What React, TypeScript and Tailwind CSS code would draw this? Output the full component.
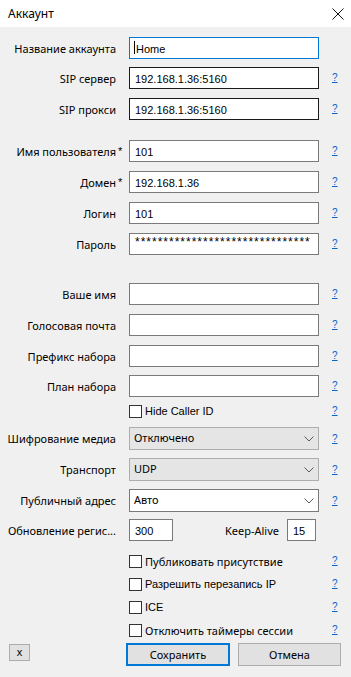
const LABEL = "w-[116px] shrink-0 text-right text-[11px] leading-none text-black whitespace-nowrap"
const VAL = "font-['Liberation_Sans',sans-serif] text-[11px] text-black"

const Help = () => (
    <span className="ml-[13px] font-['Liberation_Sans',sans-serif] text-[10px] leading-none text-[#0066cc] underline">?</span>
)

const Chevron = () => (
    <svg width="10" height="6" viewBox="0 0 10 6" className="ml-auto mr-[4px]">
        <polyline points="0.5,0.5 5,5 9.5,0.5" fill="none" stroke="#5a5a5a" strokeWidth="1" />
    </svg>
)

type FieldProps = {
    label: string
    value?: string
    star?: boolean
    border?: string
    mt: string
    children?: React.ReactNode
}

const Field = ({ label, value, star, border, mt, children }: FieldProps) => (
    <div className={`flex items-center h-[22px] ${mt}`}>
        <div className={LABEL}>{label}</div>
        <div className="w-[13px] shrink-0 pl-[2px] text-[11px] leading-none font-['Liberation_Sans',sans-serif]">{star ? '*' : ''}</div>
        <div className={`w-[190px] shrink-0 h-full bg-white border ${border ?? 'border-[#7a7a7a]'} flex items-start pt-[3px] pl-[5px] overflow-hidden whitespace-nowrap ${VAL}`}>
            {children ?? value}
        </div>
        <Help />
    </div>
)

const Select = ({ label, value, disabled, mt }: { label: string; value: string; disabled?: boolean; mt: string }) => (
    <div className={`flex items-center h-[23px] ${mt}`}>
        <div className={LABEL}>{label}</div>
        <div className="w-[13px] shrink-0" />
        <div className={`w-[190px] h-full flex items-center pl-[4px] border text-[11px] ${disabled ? 'bg-[#e5e5e5] border-[#adadad]' : 'bg-white border-[#7a7a7a]'}`}>
            <span>{value}</span>
            <Chevron />
        </div>
        <Help />
    </div>
)

const Check = ({ label, mt, tahoma }: { label: string; mt: string; tahoma?: boolean }) => (
    <div className={`flex items-center h-[22px] ${mt}`}>
        <div className="w-[129px] shrink-0" />
        <div className="w-[13px] h-[13px] bg-white border border-[#333333] shrink-0" />
        <span className={`ml-[3px] w-[174px] leading-none ${tahoma ? "font-['Liberation_Sans',sans-serif] text-[11px]" : 'text-[11px]'}`}>{label}</span>
        <Help />
    </div>
)

export default function App() {
    return (
        <div className="w-[351px] h-[677px] bg-[#f0f0f0] font-['Noto_Sans',sans-serif] text-black overflow-hidden">
            <div className="h-[27px] bg-white flex items-center justify-between pl-[8px] pr-[6px]">
                <span className="text-[12px]">Аккаунт</span>
                <svg width="12" height="12" viewBox="0 0 12 12" className="mr-[1px]">
                    <path d="M0.5 0.5 L11.5 11.5 M11.5 0.5 L0.5 11.5" stroke="#111" strokeWidth="1" />
                </svg>
            </div>

            <div className="flex items-center h-[22px] mt-[10px]">
                <div className={LABEL}>Название аккаунта</div>
                <div className="w-[13px] shrink-0" />
                <div className={`w-[190px] h-full bg-white border border-[#0078d7] flex items-start pt-[3px] pl-[4px] ${VAL}`}>
                    <span className="w-px h-[13px] bg-black mr-[1px]" />Home
                </div>
            </div>
            <Field label="SIP сервер" value="192.168.1.36:5160" border="border-[#1a1a1a]" mt="mt-[8px]" />
            <Field label="SIP прокси" value="192.168.1.36:5160" border="border-[#1a1a1a]" mt="mt-[9px]" />

            <Field label="Имя пользователя" star value="101" mt="mt-[20px]" />
            <Field label="Домен" star value="192.168.1.36" mt="mt-[9px]" />
            <Field label="Логин" value="101" mt="mt-[9px]" />
            <Field label="Пароль" mt="mt-[9px]">
                <span className="text-[12px] leading-[11px] tracking-[1px]">{'*'.repeat(31)}</span>
            </Field>

            <Field label="Ваше имя" mt="mt-[28px]" />
            <Field label="Голосовая почта" mt="mt-[9px]" />
            <Field label="Префикс набора" mt="mt-[9px]" />
            <Field label="План набора" mt="mt-[8px]" />
            <Check label="Hide Caller ID" tahoma mt="mt-[3px]" />

            <Select label="Шифрование медиа" value="Отключено" disabled mt="mt-[5px]" />
            <Select label="Транспорт" value="UDP" disabled mt="mt-[8px]" />
            <Select label="Публичный адрес" value="Авто" mt="mt-[8px]" />

            <div className="flex items-center h-[22px] mt-[7px]">
                <div className={LABEL}>Обновление регис...</div>
                <div className="w-[13px] shrink-0" />
                <div className={`w-[44px] h-full bg-white border border-[#7a7a7a] pt-[3px] pl-[5px] ${VAL}`}>300</div>
                <span className="ml-auto text-[11px] leading-none">Keep-Alive</span>
                <div className={`ml-[8px] mr-[35px] w-[29px] h-full bg-white border border-[#7a7a7a] pt-[3px] pl-[5px] ${VAL}`}>15</div>
            </div>

            <Check label="Публиковать присутствие" mt="mt-[9px]" />
            <Check label="Разрешить перезапись IP" tahoma mt="mt-[1px]" />
            <Check label="ICE" tahoma mt="mt-[1px]" />
            <Check label="Отключить таймеры сессии" mt="mt-[1px]" />

            <div className="flex items-start h-[23px] mt-[2px] text-[11px]">
                <button className="ml-[9px] mt-[1px] w-[21px] h-[17px] bg-[#e1e1e1] border border-[#adadad] flex items-center justify-center leading-none font-['Liberation_Sans',sans-serif] text-[11px]">x</button>
                <button className="ml-[96px] w-[104px] h-[23px] bg-[#e1e1e1] border-2 border-[#0078d7] flex items-center justify-center leading-none">Сохранить</button>
                <button className="ml-[8px] w-[103px] h-[23px] bg-[#e1e1e1] border border-[#adadad] flex items-center justify-center leading-none">Отмена</button>
            </div>
        </div>
    )
}
